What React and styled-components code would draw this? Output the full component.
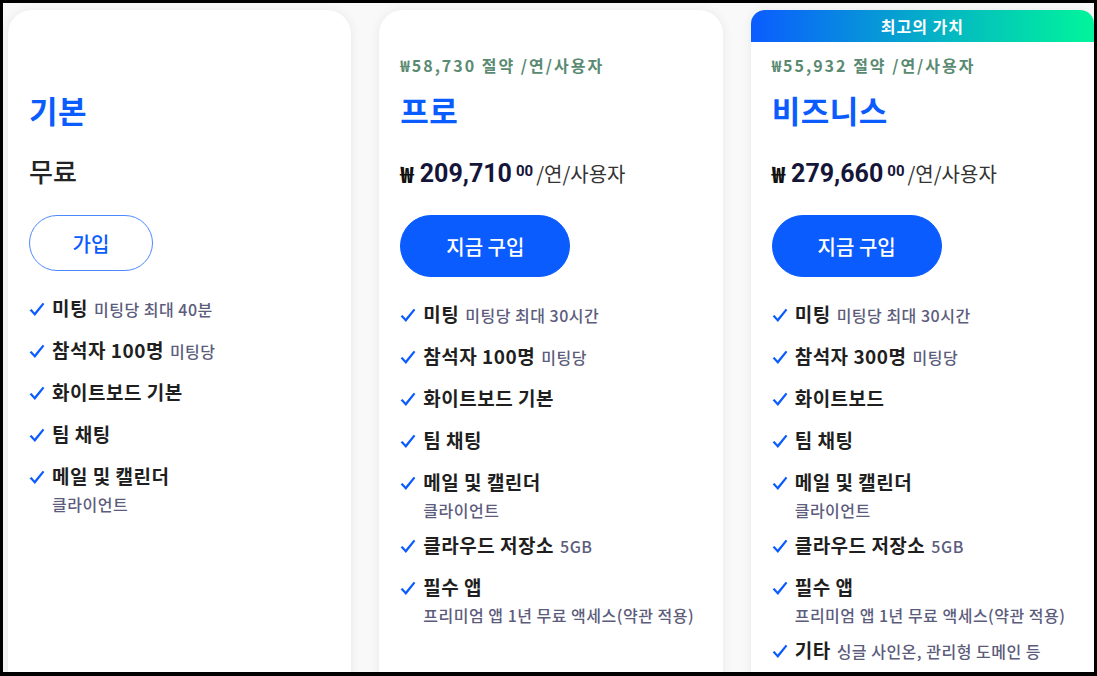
import React from "react";
import styled, { createGlobalStyle } from "styled-components";

const GlobalStyle = createGlobalStyle`
  html, body {
    margin: 0;
    padding: 0;
  }
  body {
    font-family: "Noto Sans CJK KR", "Noto Sans", sans-serif;
    color: #1f1f1f;
  }
`;

const plans = [
  {
    name: "기본",
    free: true,
    cta: "가입",
    features: [
      { title: "미팅", sub: "미팅당 최대 40분" },
      { title: "참석자 100명", sub: "미팅당" },
      { title: "화이트보드 기본" },
      { title: "팀 채팅" },
      { title: "메일 및 캘린더", detail: "클라이언트" },
    ],
  },
  {
    name: "프로",
    savings: "₩58,730 절약 /연/사용자",
    amount: "209,710",
    cta: "지금 구입",
    features: [
      { title: "미팅", sub: "미팅당 최대 30시간" },
      { title: "참석자 100명", sub: "미팅당" },
      { title: "화이트보드 기본" },
      { title: "팀 채팅" },
      { title: "메일 및 캘린더", detail: "클라이언트" },
      { title: "클라우드 저장소", sub: "5GB" },
      { title: "필수 앱", detail: "프리미엄 앱 1년 무료 액세스(약관 적용)" },
    ],
  },
  {
    name: "비즈니스",
    badge: "최고의 가치",
    savings: "₩55,932 절약 /연/사용자",
    amount: "279,660",
    cta: "지금 구입",
    features: [
      { title: "미팅", sub: "미팅당 최대 30시간" },
      { title: "참석자 300명", sub: "미팅당" },
      { title: "화이트보드" },
      { title: "팀 채팅" },
      { title: "메일 및 캘린더", detail: "클라이언트" },
      { title: "클라우드 저장소", sub: "5GB" },
      { title: "필수 앱", detail: "프리미엄 앱 1년 무료 액세스(약관 적용)" },
      { title: "기타", sub: "싱글 사인온, 관리형 도메인 등" },
    ],
  },
];

function Check() {
  return (
    <CheckBox>
      <svg width="16" height="15" viewBox="0 0 16 15">
        <path
          d="M0.6 8.2 L2.5 6.9 L5.6 10.4 L13.7 0.8 L15.4 2.1 L5.9 13.9 Z"
          fill="#0b5cff"
        />
      </svg>
    </CheckBox>
  );
}

function PlanCard({ plan }) {
  return (
    <Card $featured={!!plan.badge}>
      <Banner $show={!!plan.badge}>{plan.badge}</Banner>
      <Body>
        <Savings>{plan.savings}</Savings>
        <Title>{plan.name}</Title>
        {plan.free ? (
          <Free>무료</Free>
        ) : (
          <Price>
            <Currency>₩</Currency>
            <Amount>{plan.amount}</Amount>
            <Cents>00</Cents>
            <Per>/연/사용자</Per>
          </Price>
        )}
        <Button $outline={plan.free}>{plan.cta}</Button>
        <Features>
          {plan.features.map((f, i) => (
            <Feature key={i}>
              <Check />
              <div>
                <FeatureTitle>
                  {f.title}
                  {f.sub && <Sub>{f.sub}</Sub>}
                </FeatureTitle>
                {f.detail && <Detail>{f.detail}</Detail>}
              </div>
            </Feature>
          ))}
        </Features>
      </Body>
    </Card>
  );
}

export default function App() {
  return (
    <>
      <GlobalStyle />
      <Frame>
        <Row>
          {plans.map((p) => (
            <PlanCard key={p.name} plan={p} />
          ))}
        </Row>
      </Frame>
    </>
  );
}

const Frame = styled.div`
  width: 1097px;
  height: 676px;
  box-sizing: border-box;
  border: 3px solid #000;
  border-bottom-width: 4px;
  background: #f9f9f9;
  overflow: hidden;
`;

const Row = styled.div`
  display: flex;
  gap: 28px;
  padding: 7px 0 0 5px;
`;

const Card = styled.div`
  flex: 1 1 0;
  min-height: 720px;
  background: #fff;
  border-radius: ${(p) => (p.$featured ? "14px 14px 0 0" : "24px 24px 0 0")};
  box-shadow: 0 0 12px rgba(0, 0, 0, 0.07);
  overflow: hidden;
`;

const Banner = styled.div`
  height: 32px;
  display: flex;
  align-items: center;
  justify-content: center;
  color: #fff;
  font-size: 16px;
  font-weight: 700;
  letter-spacing: 1px;
  background: ${(p) =>
    p.$show ? "linear-gradient(90deg, #0b5cff 0%, #05b4c4 55%, #00f59b 100%)" : "transparent"};
`;

const Body = styled.div`
  padding: 0 22px 0 21px;
`;

const Savings = styled.div`
  margin-top: 12px;
  height: 22px;
  line-height: 22px;
  font-size: 16px;
  font-weight: 700;
  letter-spacing: 2px;
  color: #5a8a72;
`;

const Title = styled.h2`
  margin: 16px 0 0;
  line-height: 36px;
  font-size: 31px;
  font-weight: 700;
  letter-spacing: 0.5px;
  color: #0b5cff;
`;

const Free = styled.div`
  margin-top: 27px;
  height: 32px;
  line-height: 32px;
  font-size: 26px;
  font-weight: 500;
  color: #232323;
`;

const Price = styled.div`
  margin-top: 27px;
  height: 32px;
  line-height: 32px;
  white-space: nowrap;
`;

const Currency = styled.span`
  font-size: 22px;
  font-weight: 900;
  color: #111;
  margin-right: 6px;
  vertical-align: -1px;
`;

const Amount = styled.span`
  font-family: Roboto, "Liberation Sans", sans-serif;
  font-size: 25px;
  font-weight: 700;
  color: #15153a;
`;

const Cents = styled.span`
  font-family: Roboto, "Liberation Sans", sans-serif;
  font-size: 15px;
  font-weight: 700;
  color: #15153a;
  vertical-align: 6px;
  margin-left: 4px;
`;

const Per = styled.span`
  font-size: 20px;
  font-weight: 400;
  color: #333;
  margin-left: 3px;
`;

const Button = styled.button`
  display: flex;
  align-items: center;
  justify-content: center;
  margin-top: 28px;
  width: ${(p) => (p.$outline ? "124px" : "170px")};
  height: ${(p) => (p.$outline ? "56px" : "62px")};
  border-radius: 999px;
  border: 1px solid ${(p) => (p.$outline ? "#4d88ff" : "#0b5cff")};
  background: ${(p) => (p.$outline ? "#fff" : "#0b5cff")};
  color: ${(p) => (p.$outline ? "#0b5cff" : "#fff")};
  font-family: "Noto Sans CJK KR", sans-serif;
  font-size: 20px;
  font-weight: 500;
  padding: 0;
  cursor: pointer;
`;

const Features = styled.ul`
  list-style: none;
  margin: 24px 0 0;
  padding: 0;
  display: flex;
  flex-direction: column;
  gap: 16px;
`;

const Feature = styled.li`
  display: flex;
  align-items: flex-start;
`;

const CheckBox = styled.span`
  flex: 0 0 23px;
  height: 26px;
  display: flex;
  align-items: center;
  padding-top: 2px;
  box-sizing: border-box;
`;

const FeatureTitle = styled.div`
  height: 26px;
  font-size: 19px;
  font-weight: 700;
  letter-spacing: 0.5px;
  line-height: 26px;
  color: #1f1f1f;
  white-space: nowrap;
`;

const Sub = styled.span`
  font-size: 16px;
  font-weight: 500;
  letter-spacing: 0.5px;
  line-height: 1;
  color: #5c5c7c;
  margin-left: 6px;
`;

const Detail = styled.div`
  font-size: 16px;
  font-weight: 500;
  letter-spacing: 0.5px;
  line-height: 20px;
  color: #5c5c7c;
  margin: 5px 0 -4px;
  white-space: nowrap;
`;
